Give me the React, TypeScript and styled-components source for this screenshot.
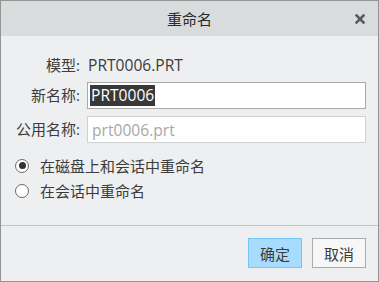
import React from "react";
import styled, { createGlobalStyle } from "styled-components";

const Global = createGlobalStyle`
  html, body { margin: 0; padding: 0; background: #eeeff1; }
  * { box-sizing: border-box; }
`;

const FONT = `"Segoe UI", "Open Sans", "Noto Sans CJK SC", sans-serif`;

const Window = styled.div`
  width: 379px;
  height: 282px;
  border: 1px solid #949494;
  background: #eeeff1;
  display: flex;
  flex-direction: column;
  font-family: ${FONT};
  color: #3c3c3c;
`;

const TitleBar = styled.div`
  height: 35px;
  flex: none;
  background: #d9dcdd;
  display: flex;
  align-items: center;
  justify-content: center;
  position: relative;
  font-size: 15px;
  color: #2a2a2a;
`;

const CloseBtn = styled.div`
  position: absolute;
  right: 13px;
  top: 13px;
  width: 10px;
  height: 10px;
  display: flex;
  align-items: center;
  justify-content: center;
`;

const Body = styled.div`
  flex: 1;
  display: flex;
  flex-direction: column;
  padding-top: 20px;
`;

const Form = styled.div`
  display: grid;
  grid-template-columns: 79px 1fr;
  grid-template-rows: 19px 27px 27px;
  column-gap: 7px;
  row-gap: 7px;
  padding-right: 12px;
  align-items: center;
`;

const Label = styled.div`
  text-align: right;
  font-size: 15px;
  line-height: 19px;
  white-space: nowrap;
  color: #3c3c3c;
`;

const Value = styled.div`
  font-size: 15.6px;
  line-height: 19px;
  padding-left: 1px;
  color: #3c3c3c;
`;

const Field = styled.div<{ $disabled?: boolean }>`
  height: 27px;
  background: #fff;
  border: 1px solid ${(p) => (p.$disabled ? "#cfd1d3" : "#a9a9a9")};
  display: flex;
  align-items: center;
  padding-left: 2px;
  font-size: 15.6px;
  color: ${(p) => (p.$disabled ? "#a8a8a8" : "#3c3c3c")};
`;

const Selected = styled.span`
  background: #383838;
  color: #ffffff;
  line-height: 21px;
  padding: 0 1px 0 1px;
`;

const Muted = styled.span`
  padding-left: 2px;
`;

const RadioGroup = styled.div`
  margin-top: 10px;
  display: flex;
  flex-direction: column;
  padding-left: 14px;
`;

const RadioRow = styled.label`
  height: 25px;
  display: flex;
  align-items: center;
  gap: 11px;
  font-size: 15px;
  color: #3c3c3c;
`;

const RadioCircle = styled.span<{ $checked?: boolean }>`
  width: 14px;
  height: 14px;
  border-radius: 50%;
  border: 1px solid #6a6a6a;
  background: #fff;
  display: flex;
  align-items: center;
  justify-content: center;
  &::after {
    content: "";
    width: 7px;
    height: 7px;
    border-radius: 50%;
    background: ${(p) => (p.$checked ? "#333" : "transparent")};
  }
`;

const Footer = styled.div`
  margin-top: auto;
  border-top: 1px solid #c3c3c3;
  height: 56px;
  display: flex;
  justify-content: flex-end;
  align-items: flex-start;
  padding-top: 12px;
  padding-right: 12px;
  gap: 10px;
`;

const Button = styled.button<{ $primary?: boolean }>`
  width: 54px;
  height: 30px;
  font-family: ${FONT};
  font-size: 15px;
  color: #3c3c3c;
  background: ${(p) => (p.$primary ? "#a7dcff" : "#f7f7f7")};
  border: 1px solid ${(p) => (p.$primary ? "#74c6f9" : "#acacac")};
  padding: 0;
  display: flex;
  align-items: center;
  justify-content: center;
`;

export default function App() {
  return (
    <>
      <Global />
      <Window>
        <TitleBar>
          重命名
          <CloseBtn>
            <svg width="10" height="10" viewBox="0 0 10 10">
              <path d="M1.5 1.5 L8.5 8.5 M8.5 1.5 L1.5 8.5" stroke="#5b5b5b" strokeWidth="2.6" strokeLinecap="square" />
            </svg>
          </CloseBtn>
        </TitleBar>
        <Body>
          <Form>
            <Label>模型:</Label>
            <Value>PRT0006.PRT</Value>
            <Label>新名称:</Label>
            <Field>
              <Selected>PRT0006</Selected>
            </Field>
            <Label>公用名称:</Label>
            <Field $disabled>
              <Muted>prt0006.prt</Muted>
            </Field>
          </Form>
          <RadioGroup>
            <RadioRow>
              <RadioCircle $checked />
              在磁盘上和会话中重命名
            </RadioRow>
            <RadioRow>
              <RadioCircle />
              在会话中重命名
            </RadioRow>
          </RadioGroup>
          <Footer>
            <Button $primary>确定</Button>
            <Button>取消</Button>
          </Footer>
        </Body>
      </Window>
    </>
  );
}
